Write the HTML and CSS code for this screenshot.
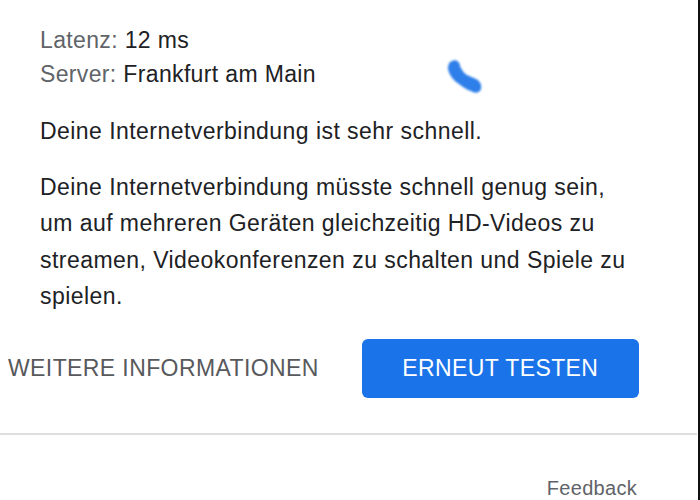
FILE: index.html
```html
<!DOCTYPE html>
<html lang="de">
<head>
    <meta charset="UTF-8">
    <meta name="viewport" content="width=device-width, initial-scale=1.0">
    <title>Speedtest Ergebnis</title>
    <link rel="stylesheet" href="styles.css">
</head>
<body>
    <div class="panel">
        <div class="content">
            <div class="stats">
                <p class="stat"><span class="stat-label">Latenz:</span> 12 ms</p>
                <p class="stat"><span class="stat-label">Server:</span> Frankfurt am Main</p>
                <svg class="blob" width="40" height="40" viewBox="0 0 40 40" aria-hidden="true">
                    <defs>
                        <filter id="soft" x="-30%" y="-30%" width="160%" height="160%">
                            <feGaussianBlur stdDeviation="1"/>
                        </filter>
                    </defs>
                    <path d="M6 3 C10 1 14 4 14 8 C16 12 17 14 21 17 C24 18 27 20 30 21 C34 23 36 27 35 31 C33 36 28 35 25 33 C21 32 17 29 13 26 C8 23 3 17 2 11 C2 7 3 4 6 3 Z" fill="#2f7fe9" filter="url(#soft)"/>
                </svg>
            </div>

            <p class="summary">Deine Internetverbindung ist sehr schnell.</p>

            <p class="details">Deine Internetverbindung müsste schnell genug sein, um auf mehreren Geräten gleichzeitig HD-Videos zu streamen, Videokonferenzen zu schalten und Spiele zu spielen.</p>
        </div>

        <div class="actions">
            <button class="link-button">WEITERE INFORMATIONEN</button>
            <button class="primary-button">ERNEUT TESTEN</button>
        </div>

        <div class="footer">
            <a class="feedback" href="#">Feedback</a>
        </div>
    </div>
</body>
</html>
```

FILE: styles.css
```css
body {
    margin: 0;
    background-color: #ffffff;
    font-family: "Liberation Sans", Arial, sans-serif;
    color: #202124;
}
.panel {
    width: 700px;
    height: 500px;
    border-right: 2px solid #111;
    box-sizing: border-box;
    overflow: hidden;
}
.content {
    padding: 23px 0 0 40px;
    width: 592px;
}
.stats {
    position: relative;
}
.stat {
    margin: 0;
    font-size: 23px;
    letter-spacing: 0.35px;
    line-height: 34px;
}
.stat-label {
    color: #606368;
}
.blob {
    position: absolute;
    left: 406px;
    top: 35px;
}
.summary {
    margin: 22px 0 0 0;
    font-size: 23px;
    letter-spacing: 0.45px;
    line-height: 36px;
}
.details {
    margin: 20px 0 0 0;
    font-size: 23px;
    letter-spacing: 0.45px;
    line-height: 36.4px;
}
.actions {
    display: flex;
    align-items: center;
    margin-top: 24px;
    padding-left: 8px;
}
.link-button {
    border: none;
    background: none;
    padding: 0;
    font-family: inherit;
    font-size: 23px;
    letter-spacing: 0.4px;
    color: #58595c;
    cursor: pointer;
}
.primary-button {
    margin-left: 43px;
    width: 277px;
    height: 59px;
    border: none;
    border-radius: 6px;
    background-color: #1a73e8;
    color: #ffffff;
    font-family: inherit;
    font-size: 23px;
    letter-spacing: 0.4px;
    cursor: pointer;
}
.footer {
    margin-top: 35px;
    margin-right: 1px;
    border-top: 2px solid #dedede;
    display: flex;
    justify-content: flex-end;
    padding: 42px 60px 0 0;
}
.feedback {
    font-size: 20px;
    letter-spacing: 0.3px;
    color: #606368;
    text-decoration: none;
}
```
